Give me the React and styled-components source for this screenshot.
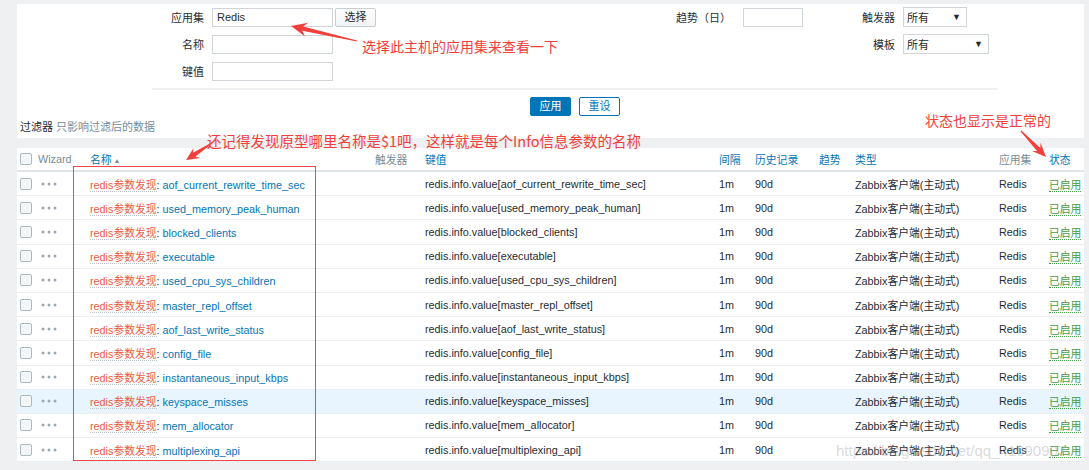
import styled, { createGlobalStyle } from "styled-components";

const GlobalStyle = createGlobalStyle`
  html, body {
    margin: 0;
    padding: 0;
    background: #eef0f1;
  }
  body {
    font-family: "Liberation Sans", Arial, "Noto Sans CJK SC", sans-serif;
    font-size: 11px;
    color: #1f2c33;
  }
`;

const Page = styled.div`
  position: relative;
  width: 1089px;
  height: 470px;
  overflow: hidden;
  padding: 4px 5px 0 17px;
  box-sizing: border-box;
`;

const FilterPanel = styled.div`
  background: #fff;
  height: 134px;
  padding-top: 3px;
  box-sizing: border-box;
`;

const FilterForm = styled.div`
  display: flex;
  margin-left: 135px;
  width: 846px;
`;

const FieldGroup = styled.div`
  display: grid;
  grid-template-columns: ${(p) => p.$label}px auto;
  column-gap: ${(p) => p.$gap}px;
  row-gap: 7px;
  grid-auto-rows: 20px;
  align-items: center;
  align-content: start;
  margin-left: ${(p) => p.$offset || 0}px;
`;

const Label = styled.label`
  text-align: right;
  white-space: nowrap;
  color: #1f2c33;
`;

const Controls = styled.div`
  display: flex;
  align-items: center;
  gap: 2px;
`;

const TextInput = styled.div`
  width: ${(p) => p.$width}px;
  height: 19px;
  border: 1px solid #cfd5d8;
  box-sizing: border-box;
  padding: 0 4px;
  line-height: 17px;
  background: #fff;
`;

const GreyButton = styled.div`
  width: 41px;
  height: 19px;
  box-sizing: border-box;
  border: 1px solid #c5cdd1;
  background: linear-gradient(#ffffff, #f1f3f4);
  text-align: center;
  line-height: 17px;
  border-radius: 2px;
`;

const Select = styled.div`
  display: flex;
  justify-content: space-between;
  align-items: center;
  width: ${(p) => p.$width}px;
  height: 20px;
  box-sizing: border-box;
  border: 1px solid #cfd5d8;
  padding: 0 5px 0 3px;
  background: #fff;

  .caret {
    font-size: 9px;
    color: #1f2c33;
  }
`;

const Separator = styled.div`
  margin: 7px 0 0 135px;
  width: 846px;
  height: 2px;
  background: #eef0f1;
`;

const Actions = styled.div`
  display: flex;
  justify-content: center;
  gap: 8px;
  margin: 7px 0 0 135px;
  width: 846px;
`;

const ActionButton = styled.div`
  width: 41px;
  height: 19px;
  box-sizing: border-box;
  border-radius: 2px;
  border: 1px solid #0275b8;
  background: ${(p) => (p.$primary ? "#0275b8" : "#fff")};
  color: ${(p) => (p.$primary ? "#fff" : "#0275b8")};
  text-align: center;
  line-height: 17px;
`;

const FilterTab = styled.div`
  margin-top: 5px;
  padding-left: 3px;
  line-height: 12px;
  color: #768d99;

  b {
    font-weight: normal;
    color: #1f2c33;
  }
`;

const Table = styled.table`
  margin-top: 10px;
  width: 1067px;
  table-layout: fixed;
  border-collapse: collapse;
  background: #fff;
  font-size: 10.8px;
`;

const Th = styled.th`
  height: 22px;
  padding: 0;
  text-align: left;
  font-weight: normal;
  white-space: nowrap;
  border-bottom: 2px solid #dfe4e7;
  color: ${(p) => (p.$link ? "#0275b8" : "#768d99")};

  .sort {
    font-size: 7px;
    color: #768d99;
    margin-left: 2px;
    vertical-align: 1px;
  }
`;

const Row = styled.tr`
  background: ${(p) => (p.$hover ? "#e8f5ff" : "#fff")};
`;

const Td = styled.td`
  height: 23.2px;
  padding: 0;
  white-space: nowrap;
  overflow: hidden;
  border-bottom: 1px solid #ebeef0;
  color: #1f2c33;
`;

const Checkbox = styled.span`
  display: block;
  width: 12px;
  height: 12px;
  margin-left: 3px;
  box-sizing: border-box;
  border: 1px solid #acbbc2;
  border-radius: 2px;
  background: #f3f5f6;
`;

const Dots = styled.svg`
  display: block;
  margin-left: 3px;
`;

const PrototypeLink = styled.span`
  color: #ee5b45;
  border-bottom: 1px dotted #b9c3c8;
`;

const ItemLink = styled.span`
  color: #0275b8;
`;

const Status = styled.span`
  color: #429e47;
  border-bottom: 1px dotted #429e47;
`;

const RedBox = styled.div`
  position: absolute;
  left: 73px;
  top: 166px;
  width: 243px;
  height: 295px;
  box-sizing: border-box;
  border: 1px solid #f04848;
  pointer-events: none;
`;

const Note = styled.div`
  position: absolute;
  left: ${(p) => p.$x}px;
  top: ${(p) => p.$y}px;
  font-family: "Noto Sans CJK SC", "Liberation Sans", sans-serif;
  font-size: ${(p) => p.$size || 14}px;
  line-height: 16px;
  color: #f2403c;
  white-space: nowrap;
`;

const Overlay = styled.svg`
  position: absolute;
  left: 0;
  top: 0;
  pointer-events: none;
`;

const Watermark = styled.div`
  position: absolute;
  left: 836px;
  top: 443px;
  font-size: 15px;
  line-height: 16px;
  color: rgba(160, 160, 160, 0.4);
  white-space: nowrap;
  pointer-events: none;
`;

const items = [
  "aof_current_rewrite_time_sec",
  "used_memory_peak_human",
  "blocked_clients",
  "executable",
  "used_cpu_sys_children",
  "master_repl_offset",
  "aof_last_write_status",
  "config_file",
  "instantaneous_input_kbps",
  "keyspace_misses",
  "mem_allocator",
  "multiplexing_api",
];

const columns = [
  { w: 21 },
  { w: 52, title: "Wizard" },
  { w: 285, title: "名称", link: true, sort: true },
  { w: 50, title: "触发器" },
  { w: 294, title: "键值", link: true },
  { w: 36, title: "间隔", link: true },
  { w: 64, title: "历史记录", link: true },
  { w: 36, title: "趋势", link: true },
  { w: 144, title: "类型", link: true },
  { w: 50, title: "应用集" },
  { w: 35, title: "状态", link: true },
];

function arrowPoints(x1, y1, x2, y2, head = 15, half = 7) {
  const len = Math.hypot(x2 - x1, y2 - y1);
  const ux = (x2 - x1) / len;
  const uy = (y2 - y1) / len;
  const nx = -uy;
  const ny = ux;
  const neck = [x2 - ux * head * 0.75, y2 - uy * head * 0.75];
  const barb = [x2 - ux * head, y2 - uy * head];
  const pts = [
    [x1 + nx * 0.6, y1 + ny * 0.6],
    [neck[0] + nx * 2.2, neck[1] + ny * 2.2],
    [barb[0] + nx * half, barb[1] + ny * half],
    [x2, y2],
    [barb[0] - nx * half, barb[1] - ny * half],
    [neck[0] - nx * 2.2, neck[1] - ny * 2.2],
    [x1 - nx * 0.6, y1 - ny * 0.6],
  ];
  return pts.map((p) => p.map((v) => v.toFixed(1)).join(",")).join(" ");
}

export default function App() {
  return (
    <>
      <GlobalStyle />
      <Page>
        <FilterPanel>
          <FilterForm>
            <FieldGroup $label={52} $gap={8}>
              <Label>应用集</Label>
              <Controls>
                <TextInput $width={121}>Redis</TextInput>
                <GreyButton>选择</GreyButton>
              </Controls>
              <Label>名称</Label>
              <Controls>
                <TextInput $width={121} />
              </Controls>
              <Label>键值</Label>
              <Controls>
                <TextInput $width={121} />
              </Controls>
            </FieldGroup>
            <FieldGroup $label={60} $gap={12} $offset={295}>
              <Label>趋势（日）</Label>
              <Controls>
                <TextInput $width={60} />
              </Controls>
            </FieldGroup>
            <FieldGroup $label={40} $gap={8} $offset={52}>
              <Label>触发器</Label>
              <Select $width={64}>
                所有<span className="caret">▼</span>
              </Select>
              <Label>模板</Label>
              <Select $width={86}>
                所有<span className="caret">▼</span>
              </Select>
            </FieldGroup>
          </FilterForm>
          <Separator />
          <Actions>
            <ActionButton $primary>应用</ActionButton>
            <ActionButton>重设</ActionButton>
          </Actions>
          <FilterTab>
            <b>过滤器</b> 只影响过滤后的数据
          </FilterTab>
        </FilterPanel>

        <Table>
          <colgroup>
            {columns.map((c, i) => (
              <col key={i} style={{ width: c.w }} />
            ))}
          </colgroup>
          <thead>
            <tr>
              {columns.map((c, i) => (
                <Th key={i} $link={c.link}>
                  {i === 0 ? (
                    <Checkbox />
                  ) : (
                    <>
                      {c.title}
                      {c.sort && <span className="sort">▲</span>}
                    </>
                  )}
                </Th>
              ))}
            </tr>
          </thead>
          <tbody>
            {items.map((name) => (
              <Row key={name} $hover={name === "keyspace_misses"}>
                <Td>
                  <Checkbox />
                </Td>
                <Td>
                  <Dots width="16" height="4" viewBox="0 0 16 4">
                    <circle cx="2" cy="2" r="1.5" fill="#9aa9b1" />
                    <circle cx="8" cy="2" r="1.5" fill="#9aa9b1" />
                    <circle cx="14" cy="2" r="1.5" fill="#9aa9b1" />
                  </Dots>
                </Td>
                <Td>
                  <PrototypeLink>redis参数发现</PrototypeLink>: <ItemLink>{name}</ItemLink>
                </Td>
                <Td />
                <Td>redis.info.value[{name}]</Td>
                <Td>1m</Td>
                <Td>90d</Td>
                <Td />
                <Td>Zabbix客户端(主动式)</Td>
                <Td>Redis</Td>
                <Td>
                  <Status>已启用</Status>
                </Td>
              </Row>
            ))}
          </tbody>
        </Table>

        <Watermark>https://blog.csdn.net/qq_41690907</Watermark>
        <RedBox />
        <Note $x={362} $y={38}>选择此主机的应用集来查看一下</Note>
        <Note $x={207} $y={133} $size={14.5}>
          还记得发现原型哪里名称是$1吧，这样就是每个Info信息参数的名称
        </Note>
        <Note $x={925} $y={112}>状态也显示是正常的</Note>
        <Overlay width="1089" height="470" viewBox="0 0 1089 470">
          <polygon points={arrowPoints(357, 41, 291, 26, 16, 7)} fill="#f2403c" />
          <polygon points={arrowPoints(212, 143, 186, 160, 13, 6)} fill="#f2403c" />
          <polygon points={arrowPoints(1021, 131, 1046, 157, 14, 6)} fill="#f2403c" />
        </Overlay>
      </Page>
    </>
  );
}
